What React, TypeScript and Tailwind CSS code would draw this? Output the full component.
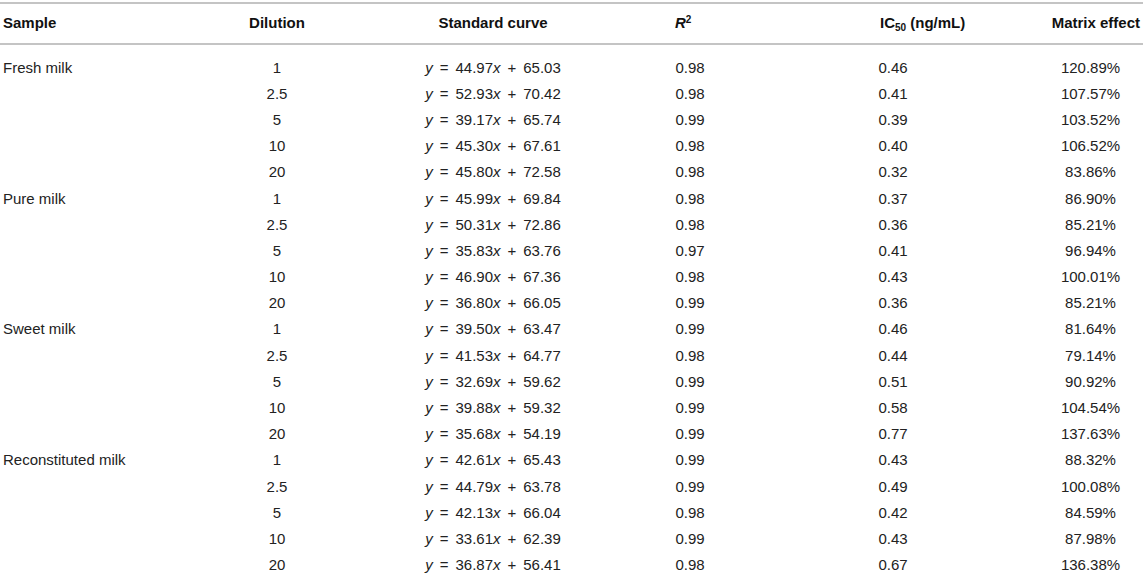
const rows: [string, string, string, string, string, string, string][] = [
  ["Fresh milk", "1", "44.97", "65.03", "0.98", "0.46", "120.89%"],
  ["", "2.5", "52.93", "70.42", "0.98", "0.41", "107.57%"],
  ["", "5", "39.17", "65.74", "0.99", "0.39", "103.52%"],
  ["", "10", "45.30", "67.61", "0.98", "0.40", "106.52%"],
  ["", "20", "45.80", "72.58", "0.98", "0.32", "83.86%"],
  ["Pure milk", "1", "45.99", "69.84", "0.98", "0.37", "86.90%"],
  ["", "2.5", "50.31", "72.86", "0.98", "0.36", "85.21%"],
  ["", "5", "35.83", "63.76", "0.97", "0.41", "96.94%"],
  ["", "10", "46.90", "67.36", "0.98", "0.43", "100.01%"],
  ["", "20", "36.80", "66.05", "0.99", "0.36", "85.21%"],
  ["Sweet milk", "1", "39.50", "63.47", "0.99", "0.46", "81.64%"],
  ["", "2.5", "41.53", "64.77", "0.98", "0.44", "79.14%"],
  ["", "5", "32.69", "59.62", "0.99", "0.51", "90.92%"],
  ["", "10", "39.88", "59.32", "0.99", "0.58", "104.54%"],
  ["", "20", "35.68", "54.19", "0.99", "0.77", "137.63%"],
  ["Reconstituted milk", "1", "42.61", "65.43", "0.99", "0.43", "88.32%"],
  ["", "2.5", "44.79", "63.78", "0.99", "0.49", "100.08%"],
  ["", "5", "42.13", "66.04", "0.98", "0.42", "84.59%"],
  ["", "10", "33.61", "62.39", "0.99", "0.43", "87.98%"],
  ["", "20", "36.87", "56.41", "0.98", "0.67", "136.38%"],
];

// column widths chosen so the centres line up with the reference
const grid = "grid grid-cols-[200px_154px_278px_116px_290px_105px]";

function Equation({ a, b }: { a: string; b: string }) {
  return (
    <span className="whitespace-nowrap">
      <i>y</i>
      <span className="px-[7px]">=</span>
      {a}
      <i>x</i>
      <span className="px-[7px]">+</span>
      {b}
    </span>
  );
}

export default function App() {
  return (
    <div className="w-[1143px] h-[579px] bg-white overflow-hidden text-[15px] text-[#222] [font-family:'Liberation_Sans',Arial,sans-serif]">
      <div className="mt-[2px] border-t-2 border-[#c4c4c4]" />
      <div className={`${grid} h-[39px] items-center font-bold text-[#111]`}>
        <div className="pl-[3px]">Sample</div>
        <div className="text-center">Dilution</div>
        <div className="text-center">Standard curve</div>
        <div className="pl-[43px]">
          <i>R</i>
          <sup className="text-[10px]">2</sup>
        </div>
        <div className="pl-[132px]">
          IC<sub className="text-[10px]">50</sub> (ng/mL)
        </div>
        <div className="text-right pr-[3px]">Matrix effect</div>
      </div>
      <div className="border-t-2 border-[#c4c4c4]" />
      <div className="pt-[9px]">
        {rows.map((r, i) => (
          <div key={i} className={`${grid} h-[26.2px] items-center leading-none`}>
            <div className="pl-[3px]">{r[0]}</div>
            <div className="text-center">{r[1]}</div>
            <div className="text-center">
              <Equation a={r[2]} b={r[3]} />
            </div>
            <div className="text-center">{r[4]}</div>
            <div className="text-center">{r[5]}</div>
            <div className="text-center">{r[6]}</div>
          </div>
        ))}
      </div>
    </div>
  );
}
